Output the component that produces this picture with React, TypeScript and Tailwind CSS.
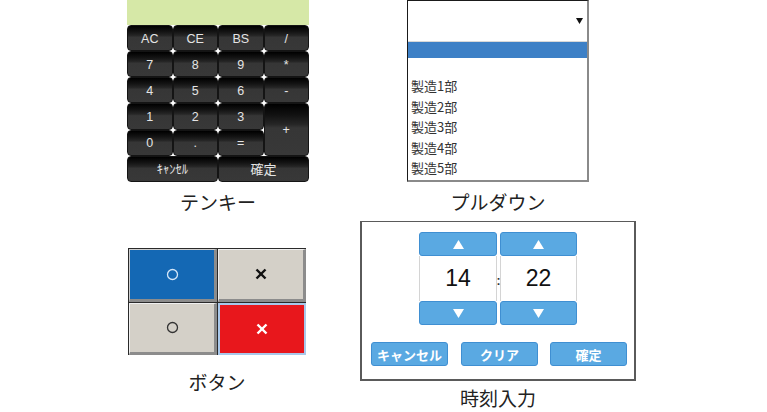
import React from "react";

const calcBtn =
  "flex items-center justify-center rounded-[4px] border border-[#141414] bg-[linear-gradient(to_bottom,#000000_0%,#121212_22%,#262626_40%,#363636_47%,#383838_100%)] text-[#e4e4e4] text-[12.5px] pt-[2px] font-['Liberation_Sans','Noto_Sans_CJK_JP',sans-serif]";

function Calculator() {
  return (
    <div className="w-[182px] h-[182px] flex flex-col bg-white">
      <div className="h-[25px] bg-[#d6e8a7]" />
      <div className="grid grid-cols-4 grid-rows-6 h-[157px]">
        <div className={calcBtn}>AC</div>
        <div className={calcBtn}>CE</div>
        <div className={calcBtn}>BS</div>
        <div className={calcBtn}>/</div>
        <div className={calcBtn}>7</div>
        <div className={calcBtn}>8</div>
        <div className={calcBtn}>9</div>
        <div className={calcBtn + " text-[#b0b0b0] text-[10px]"}>*</div>
        <div className={calcBtn}>4</div>
        <div className={calcBtn}>5</div>
        <div className={calcBtn}>6</div>
        <div className={calcBtn + " text-[#a0a0a0] text-[10px]"}>-</div>
        <div className={calcBtn}>1</div>
        <div className={calcBtn}>2</div>
        <div className={calcBtn}>3</div>
        <div className={calcBtn + " row-span-2 text-[#b8b8b8]"}>+</div>
        <div className={calcBtn}>0</div>
        <div className={calcBtn + " text-[#909090] text-[10px]"}>.</div>
        <div className={calcBtn}>=</div>
        <div className={calcBtn + " col-span-2"}>ｷｬﾝｾﾙ</div>
        <div className={calcBtn + " col-span-2 text-[13px]"}>確定</div>
      </div>
    </div>
  );
}

function Pulldown() {
  const items = ["製造1部", "製造2部", "製造3部", "製造4部", "製造5部"];
  return (
    <div className="w-[182px] h-[182px] flex flex-col overflow-hidden bg-white border-t border-l border-[#1a1a1a] border-r-2 border-b-2 border-r-[#8a8a8a] border-b-[#8a8a8a]">
      <div className="h-[40px] flex items-center justify-end pr-[4px] shrink-0">
        <svg width="7" height="6" viewBox="0 0 7 6">
          <polygon points="0,0 7,0 3.5,6" fill="#111" />
        </svg>
      </div>
      <div className="h-px bg-[#d8d8d8] shrink-0" />
      <div className="h-[16px] bg-[#3d80c6] shrink-0" />
      <div className="pt-[18px] pl-[3px] flex flex-col">
        {items.map((t) => (
          <div
            key={t}
            className="leading-[20.5px] text-[13px] text-[#333] font-['Noto_Sans_CJK_JP',sans-serif]"
          >
            {t}
          </div>
        ))}
      </div>
    </div>
  );
}

function Circle({ color }: { color: string }) {
  return (
    <svg width="13" height="13" viewBox="0 0 13 13">
      <circle cx="6.5" cy="6.5" r="5" fill="none" stroke={color} strokeWidth="1.3" />
    </svg>
  );
}

function Cross({ color }: { color: string }) {
  return (
    <svg width="12" height="12" viewBox="0 0 12 12">
      <line x1="1.5" y1="1.5" x2="10.5" y2="10.5" stroke={color} strokeWidth="2.4" />
      <line x1="10.5" y1="1.5" x2="1.5" y2="10.5" stroke={color} strokeWidth="2.4" />
    </svg>
  );
}

function ButtonPanel() {
  return (
    <div className="w-[178px] h-[107px] border-t border-l border-[#2a2a2a] grid grid-cols-2 grid-rows-2 gap-px bg-[#2a2a2a]">
      <div className="flex items-center justify-center bg-[#1468b4] border-t border-l border-t-[#cfcfcf] border-l-[#cfcfcf] border-r-[3px] border-b-[3px] border-r-[#8c8c8c] border-b-[#8c8c8c]">
        <Circle color="#d4e6f8" />
      </div>
      <div className="flex items-center justify-center bg-[#d4d0c8] border-t border-l border-t-[#f0f0f0] border-l-[#f0f0f0] border-r-[3px] border-b-[3px] border-r-[#8c8c8c] border-b-[#8c8c8c]">
        <Cross color="#111" />
      </div>
      <div className="flex items-center justify-center bg-[#d4d0c8] border-t border-l border-t-[#f0f0f0] border-l-[#f0f0f0] border-r-[3px] border-b-[3px] border-r-[#8c8c8c] border-b-[#8c8c8c]">
        <Circle color="#333" />
      </div>
      <div className="flex items-center justify-center bg-[#e8171c] border-2 border-[#a9c8ea]">
        <Cross color="#ffffff" />
      </div>
    </div>
  );
}

function Tri({ up }: { up: boolean }) {
  return (
    <svg width="11" height="9" viewBox="0 0 11 9">
      <polygon points={up ? "5.5,0 11,9 0,9" : "0,0 11,0 5.5,9"} fill="#fff" />
    </svg>
  );
}

const blueBtn =
  "flex items-center justify-center rounded-[3px] bg-[#5aa9e2] border border-[#3f8fd2]";

function SpinCol({ value, w }: { value: string; w: string }) {
  return (
    <div className={"flex flex-col " + w}>
      <div className={blueBtn + " h-[24px]"}>
        <Tri up />
      </div>
      <div className="h-[45px] bg-white border-x border-[#d4d4d4] flex items-center justify-center text-[23px] text-[#111] font-['Liberation_Sans',sans-serif]">
        {value}
      </div>
      <div className={blueBtn + " h-[24px]"}>
        <Tri up={false} />
      </div>
    </div>
  );
}

function TimeInput() {
  const txt =
    "text-white text-[13px] font-bold font-['Noto_Sans_CJK_JP',sans-serif] leading-none";
  return (
    <div className="w-[276px] h-[160px] bg-white border-2 border-t border-[#5a5a5a] flex flex-col">
      <div className="pl-[57px] pt-[10px] flex">
        <SpinCol value="14" w="w-[78px]" />
        <div className="w-[3px] flex items-center justify-center text-[12px] font-bold text-[#333] pt-[4px] font-['Liberation_Sans',sans-serif]">
          :
        </div>
        <SpinCol value="22" w="w-[77px]" />
      </div>
      <div className="pl-[9px] mt-[17px] flex">
        <div className={blueBtn + " w-[77px] h-[24px] " + txt}>キャンセル</div>
        <div className={blueBtn + " w-[77px] h-[24px] ml-[13px] " + txt}>クリア</div>
        <div className={blueBtn + " w-[77px] h-[24px] ml-[12px] " + txt}>確定</div>
      </div>
    </div>
  );
}

const label =
  "text-center text-[19px] leading-[24px] text-[#222] font-['Noto_Sans_CJK_JP',sans-serif]";

export default function App() {
  return (
    <div className="w-[767px] h-[412px] bg-white overflow-hidden">
      <div className="flex pl-[127px]">
        <div className="w-[182px] flex flex-col">
          <Calculator />
          <div className={label + " mt-[8px]"}>テンキー</div>
        </div>
        <div className="w-[182px] ml-[98px] flex flex-col">
          <Pulldown />
          <div className={label + " mt-[8px]"}>プルダウン</div>
        </div>
      </div>
      <div className="flex items-start pl-[128px]">
        <div className="w-[178px] flex flex-col mt-[34px]">
          <ButtonPanel />
          <div className={label + " mt-[15px]"}>ボタン</div>
        </div>
        <div className="w-[276px] ml-[54px] flex flex-col mt-[7px]">
          <TimeInput />
          <div className={label + " mt-[5px]"}>時刻入力</div>
        </div>
      </div>
    </div>
  );
}
